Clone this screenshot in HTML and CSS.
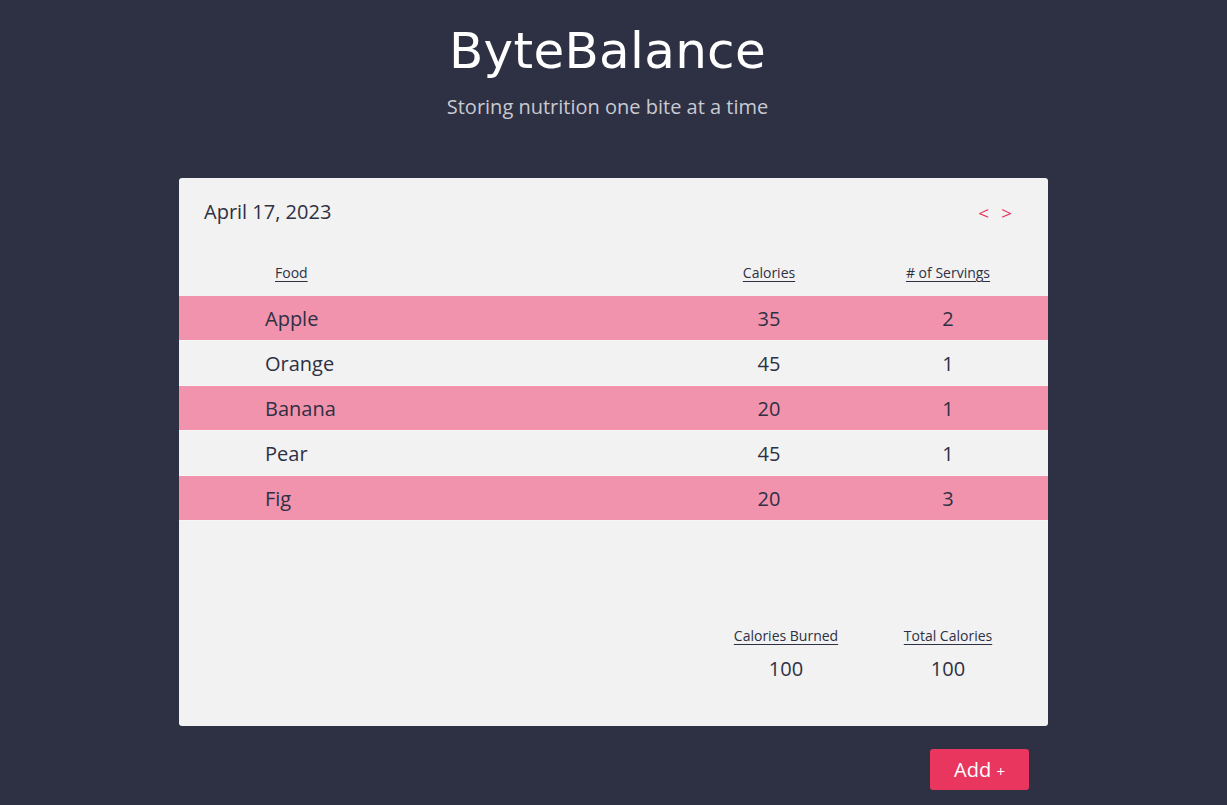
FILE: index.html
```html
<!DOCTYPE html>
<html lang="en">
<head>
<meta charset="utf-8">
<title>ByteBalance</title>
<link rel="stylesheet" href="styles.css">
</head>
<body>
<header class="hero">
  <h1 class="title">ByteBalance</h1>
  <p class="tagline">Storing nutrition one bite at a time</p>
</header>
<main class="card">
  <div class="card-top">
    <h2 class="date">April 17, 2023</h2>
    <div class="nav">
      <button class="nav-btn">&lt;</button>
      <button class="nav-btn">&gt;</button>
    </div>
  </div>
  <div class="table">
    <div class="row head">
      <span class="c-food"><u>Food</u></span>
      <span class="c-cal"><u>Calories</u></span>
      <span class="c-serv"><u># of Servings</u></span>
    </div>
    <div class="row item pink">
      <span class="c-food">Apple</span><span class="c-cal">35</span><span class="c-serv">2</span>
    </div>
    <div class="row item">
      <span class="c-food">Orange</span><span class="c-cal">45</span><span class="c-serv">1</span>
    </div>
    <div class="row item pink">
      <span class="c-food">Banana</span><span class="c-cal">20</span><span class="c-serv">1</span>
    </div>
    <div class="row item">
      <span class="c-food">Pear</span><span class="c-cal">45</span><span class="c-serv">1</span>
    </div>
    <div class="row item pink">
      <span class="c-food">Fig</span><span class="c-cal">20</span><span class="c-serv">3</span>
    </div>
  </div>
  <div class="totals">
    <div class="total">
      <span class="total-label">Calories Burned</span>
      <span class="total-value">100</span>
    </div>
    <div class="total">
      <span class="total-label">Total Calories</span>
      <span class="total-value">100</span>
    </div>
  </div>
</main>
<div class="actions">
  <button class="add-btn">Add <span class="plus">+</span></button>
</div>
</body>
</html>
```

FILE: styles.css
```css
* { box-sizing: border-box; }
html, body { margin: 0; padding: 0; }
body {
  background: #2e3044;
  font-family: "Open Sans", "Noto Sans", sans-serif;
  color: #2e3044;
  min-height: 805px;
}
.hero {
  text-align: center;
  padding-top: 16px;
  padding-right: 12px;
  height: 178px;
}
.title {
  margin: 0;
  font-family: "DejaVu Sans", sans-serif;
  font-weight: 400;
  font-size: 50px;
  line-height: 70px;
  letter-spacing: 0.3px;
  color: #ffffff;
}
.tagline {
  margin: 7px 0 0;
  font-size: 20px;
  line-height: 28px;
  color: #c9cad0;
}
.card {
  width: 869px;
  height: 548px;
  margin: 0 auto;
  background: #f2f2f2;
  border-radius: 3px;
  display: flex;
  flex-direction: column;
}
.card-top {
  display: flex;
  justify-content: space-between;
  align-items: center;
  padding: 3px 36px 0 25px;
  height: 64px;
}
.date {
  margin: 0;
  font-size: 20px;
  font-weight: 400;
  line-height: 26px;
}
.nav { display: flex; gap: 12px; padding-top: 2px; }
.nav-btn {
  border: 0;
  background: none;
  padding: 0;
  font-family: inherit;
  font-size: 19px;
  line-height: 24px;
  color: #e8365f;
  cursor: pointer;
}
.row {
  display: grid;
  grid-template-columns: 394px 140px 138px;
  column-gap: 40px;
  padding-left: 86px;
  align-items: center;
}
.row.head {
  height: 54px;
  font-size: 14px;
  padding-top: 6px;
}
.row.head .c-food { padding-left: 10px; }
.row.head u { text-decoration-thickness: 1px; text-underline-offset: 3px; }
.row.item {
  height: 45px;
  font-size: 20px;
  border-bottom: 1px solid #f6f6f6;
}
.row.pink { background: #f293ad; }
.c-cal, .c-serv { text-align: center; }
.totals {
  margin-top: auto;
  display: flex;
  justify-content: flex-end;
  gap: 22px;
  padding: 0 30px 44px 0;
}
.total {
  width: 140px;
  display: flex;
  flex-direction: column;
  align-items: center;
  gap: 11px;
}
.total-label {
  font-size: 14px;
  text-decoration: underline;
  text-decoration-thickness: 1px;
  text-underline-offset: 3px;
}
.total-value {
  font-size: 20px;
  line-height: 26px;
}
.actions {
  width: 869px;
  margin: 23px auto 0;
  display: flex;
  justify-content: flex-end;
  padding-right: 19px;
}
.add-btn {
  width: 99px;
  height: 41px;
  border: 0;
  border-radius: 3px;
  background: #e8365f;
  color: #ffffff;
  font-family: inherit;
  font-size: 20px;
  cursor: pointer;
}
.add-btn .plus { font-size: 15px; }
```
